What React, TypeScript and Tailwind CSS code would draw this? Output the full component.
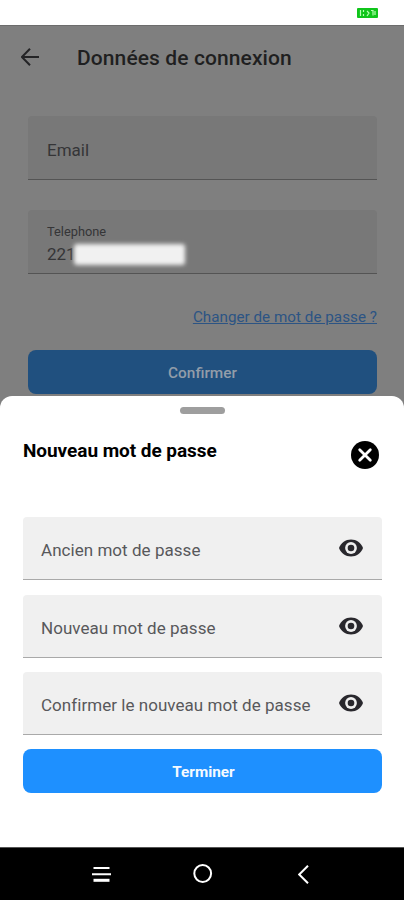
function EyeIcon() {
  return (
    <svg className="block h-[18px] w-6" viewBox="0 0 24 18" fill="none">
      <path d="M0 9C2 3.700 6.600.5 12 .5S22 3.700 24 9c-2 5.300-6.600 8.500-12 8.500S2 14.300 0 9Z" fill="#29282d" />
      <circle cx="12" cy="9" r="5.900" fill="#f0f0f0" />
      <circle cx="12" cy="9" r="3.300" fill="#29282d" />
    </svg>
  );
}

function PasswordField({ label }: { label: string }) {
  return (
    <div className="flex h-[63px] items-center justify-between rounded-t-[4px] border-b border-[#a9a9a9] bg-[#f0f0f0] pl-[18px] pr-[19px]">
      <span className="whitespace-nowrap pt-[4px] text-[17px] leading-5 tracking-[0.04px] text-[#58585b]">{label}</span>
      <EyeIcon />
    </div>
  );
}

export default function App() {
  return (
    <div className="relative flex h-[900px] w-[404px] flex-col overflow-hidden bg-white font-['Roboto',sans-serif]">
      <div className="flex h-[25px] shrink-0 justify-end pr-[26px] pt-2">
        <svg className="block h-[10px] w-[21px]" viewBox="0 0 21 10">
          <rect width="21" height="10" rx="1" fill="#10c51b" />
          <path d="M3.500 2v6M6.500 2v2M6.500 6v2M10 3l2 2-2 3M14 2.500h2v5M18 3v4" fill="none" stroke="#b4ffb0" strokeWidth="1.200" />
        </svg>
      </div>

      <main className="h-[387px] shrink-0 border-t border-[#6c6c6c] bg-[#7f7f7f]">
        <header className="flex h-16 items-center pl-[21px]">
          <svg className="block h-[18px] w-[18px] -translate-y-px" viewBox="0 0 18 18" fill="none" stroke="#242426" strokeWidth="2">
            <path d="M9 .7.900 9 9 17.300M1 9h17" />
          </svg>
          <h1 className="ml-[38px] whitespace-nowrap text-[21px] font-medium leading-6 tracking-[0.1px] text-[#1f1f21]">Données de connexion</h1>
        </header>
        <div className="ml-[28px] mt-[26px] w-[349px]">
          <div className="flex h-16 items-center rounded-t-[4px] border-b border-[#545454] bg-[#787878] pl-[19px] pt-[5px]">
            <span className="text-[17px] leading-5 text-[#353537]">Email</span>
          </div>
          <div className="mt-[30px] h-16 rounded-t-[4px] border-b border-[#545454] bg-[#787878] pl-[19px] pt-[14px]">
            <div className="text-[12.800px] leading-4 text-[#353537]">Telephone</div>
            <div className="flex h-[29px] items-center">
              <span className="-mt-[2px] w-[27px] text-[17px] leading-5 text-[#353537]">221</span>
              <div className="h-[21px] w-[111px] rounded-[3px] bg-[#f1f1f1] blur-[2px]" />
            </div>
          </div>
          <div className="mt-[33px] flex justify-end">
            <a className="whitespace-nowrap text-[15.200px] leading-5 tracking-[0.03px] text-[#2c5484] underline">Changer de mot de passe ?</a>
          </div>
          <button className="mt-[23px] flex h-11 w-full items-center justify-center rounded-[8px] bg-[#20507f] pt-[3px] text-[15.400px] font-medium text-[#929da9]">Confirmer</button>
        </div>
      </main>

      <section className="relative -mt-4 flex h-[451px] shrink-0 flex-col rounded-t-[12px] bg-white pl-[23px] pr-[22px]">
        <div className="mx-auto mt-[11px] h-[7px] w-[45px] shrink-0 rounded-full bg-[#9e9e9e]" />
        <div className="mt-[27px] flex h-7 justify-between pr-[3px]">
          <h2 className="-mt-[2px] whitespace-nowrap text-[19px] font-bold leading-6 tracking-[-0.05px] text-black">Nouveau mot de passe</h2>
          <svg className="block h-7 w-7" viewBox="0 0 28 28">
            <circle cx="14" cy="14" r="14" fill="#000" />
            <path d="m8.700 8.700 10.600 10.600m0-10.600L8.700 19.300" stroke="#fff" strokeWidth="2.800" strokeLinecap="round" />
          </svg>
        </div>
        <div className="mt-12 flex flex-col gap-[14.500px]">
          <PasswordField label="Ancien mot de passe" />
          <PasswordField label="Nouveau mot de passe" />
          <PasswordField label="Confirmer le nouveau mot de passe" />
          <button className="-mt-px flex h-11 w-full items-center justify-center rounded-[8px] bg-[#1e90ff] pl-[2px] pt-[3px] text-[15.300px] font-bold text-[#f4faff]">Terminer</button>
        </div>
      </section>

      <nav className="flex h-[53px] shrink-0 items-center border-t border-[#555] bg-black">
        <svg className="ml-[92px] block h-[17px] w-[19px]" viewBox="0 0 19 17" stroke="#fff">
          <path d="M1.500 2h16M0 8.300h19" strokeWidth="2" />
          <path d="M1.500 14.300h16" strokeWidth="3" />
        </svg>
        <svg className="ml-[82px] block h-5 w-5" viewBox="0 0 20 20" fill="none" stroke="#fff" strokeWidth="2">
          <circle cx="9.700" cy="9.500" r="8.400" />
        </svg>
        <svg className="ml-[85px] block h-[19px] w-3" viewBox="0 0 12 19" fill="none" stroke="#fff" strokeWidth="2">
          <path d="M10 .7 1.200 9.500 10 18.300" />
        </svg>
      </nav>
    </div>
  );
}
